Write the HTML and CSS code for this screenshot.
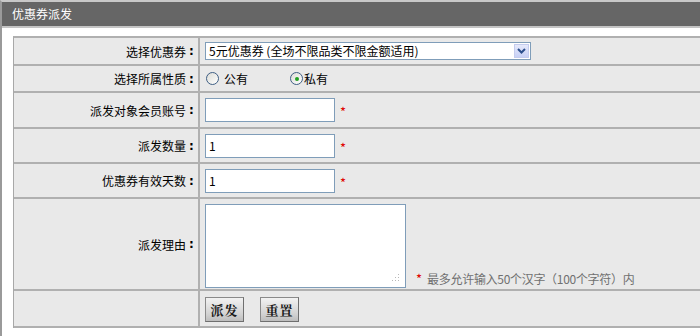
FILE: index.html
```html
<!DOCTYPE html>
<html lang="zh">
<head>
<meta charset="utf-8">
<title>优惠券派发</title>
<link rel="stylesheet" href="styles.css">
</head>
<body>
<div class="panel">
  <div class="panel-head">优惠券派发</div>
  <div class="panel-body">
    <div class="form">
      <div class="row r1">
        <div class="label">选择优惠券<span class="colon">:</span></div>
        <div class="field">
          <div class="select">
            <span class="select-text">5元优惠券 (全场不限品类不限金额适用)</span>
            <span class="select-btn"><svg width="9" height="6" viewBox="0 0 9 6"><path d="M1 1 L4.5 4.5 L8 1" fill="none" stroke="#2c4f8c" stroke-width="2"/></svg></span>
          </div>
        </div>
      </div>
      <div class="row r2">
        <div class="label">选择所属性质<span class="colon">:</span></div>
        <div class="field radios">
          <span class="radio-item"><span class="radio"></span><span class="radio-label">公有</span></span>
          <span class="radio-item second"><span class="radio checked"></span><span class="radio-label tight">私有</span></span>
        </div>
      </div>
      <div class="row r3">
        <div class="label">派发对象会员账号<span class="colon">:</span></div>
        <div class="field"><div class="input"></div><span class="star">*</span></div>
      </div>
      <div class="row r4">
        <div class="label">派发数量<span class="colon">:</span></div>
        <div class="field"><div class="input">1</div><span class="star">*</span></div>
      </div>
      <div class="row r5">
        <div class="label">优惠券有效天数<span class="colon">:</span></div>
        <div class="field"><div class="input">1</div><span class="star">*</span></div>
      </div>
      <div class="row r6">
        <div class="label">派发理由<span class="colon">:</span></div>
        <div class="field area-field">
          <div class="textarea">
            <svg class="grip" width="8" height="8" viewBox="0 0 8 8"><g fill="#b8b8b8"><rect x="6" y="0" width="1" height="1"/><rect x="6" y="3" width="1" height="1"/><rect x="3" y="3" width="1" height="1"/><rect x="6" y="6" width="1" height="1"/><rect x="3" y="6" width="1" height="1"/><rect x="0" y="6" width="1" height="1"/></g></svg>
          </div>
          <span class="star note-star">*</span>
          <span class="note">最多允许输入50个汉字（100个字符）内</span>
        </div>
      </div>
      <div class="row r7">
        <div class="label"></div>
        <div class="field buttons">
          <span class="btn">派发</span>
          <span class="btn">重置</span>
        </div>
      </div>
    </div>
  </div>
</div>
</body>
</html>
```
FILE: styles.css
```css
html, body {
  margin: 0;
  padding: 0;
  background: #ffffff;
  overflow: hidden;
  width: 700px;
  height: 336px;
}
body {
  font-family: "Noto Sans CJK SC", "Liberation Sans", sans-serif;
  font-size: 12px;
  color: #000;
}
.panel {
  width: 730px;
  border-left: 2px solid #9a9a9a;
  border-top: 2px solid #c8c8c8;
  height: 340px;
}
.panel-head {
  height: 24px;
  background: #666666;
  color: #ffffff;
  font-size: 12px;
  line-height: 24px;
  padding-left: 10px;
  border-bottom: 2px solid #c4c4c4;
}
.panel-body {
  padding: 8px 0 0 11px;
}
.form {
  border-top: 2px solid #b0b0b0;
  border-left: 1px solid #a8a8a8;
  background: #e9e9e9;
}
.row {
  display: grid;
  grid-template-columns: 186px 1fr;
  border-bottom: 2px solid #b0b0b0;
  box-sizing: border-box;
}
.r1 { height: 28px; }
.r2 { height: 27px; }
.r3 { height: 36px; }
.r4 { height: 35px; }
.r5 { height: 35px; }
.r6 { height: 92px; }
.r7 { height: 37px; }
.label {
  border-right: 2px solid #b0b0b0;
  padding-right: 1px;
  display: flex;
  align-items: center;
  justify-content: flex-end;
  font-size: 12px;
}
.colon {
  display: inline-block;
  width: 11px;
  text-align: center;
  font-weight: bold;
  font-family: "DejaVu Sans", sans-serif;
  font-size: 12px;
}
.field {
  display: flex;
  align-items: center;
  padding-left: 5px;
}
.select {
  width: 326px;
  height: 18px;
  box-sizing: border-box;
  border: 1px solid #7f9db9;
  background: #fff;
  display: flex;
  align-items: center;
  justify-content: space-between;
  font-size: 12px;
}
.select-text {
  padding-left: 3px;
  line-height: 16px;
}
.select-btn {
  width: 15px;
  height: 14px;
  margin-right: 1px;
  background: linear-gradient(#e6e9fb, #c7d0f5);
  border: 1px solid #c4ccee;
  box-sizing: border-box;
  display: flex;
  align-items: center;
  justify-content: center;
}
.radio-item {
  display: flex;
  align-items: center;
}
.radio-item.second { margin-left: 41px; }
.radio {
  width: 13px;
  height: 13px;
  box-sizing: border-box;
  border: 1px solid #3f5e84;
  border-radius: 50%;
  background: linear-gradient(135deg, #dcdcd6, #ffffff);
  margin-left: 1px;
  position: relative;
}
.radio.checked::after {
  content: "";
  position: absolute;
  left: 3.5px;
  top: 3.5px;
  width: 4px;
  height: 4px;
  border-radius: 50%;
  background: #21a121;
}
.radio-label { margin-left: 5px; }
.radio-label.tight { margin-left: 1px; }
.input {
  width: 130px;
  height: 24px;
  box-sizing: border-box;
  border: 1px solid #7f9db9;
  background: #fff;
  padding-left: 3px;
  line-height: 22px;
  font-size: 12px;
}
.star {
  color: #e00000;
  margin-left: 5px;
  font-size: 13px;
  line-height: 12px;
  padding-top: 4px;
}
.area-field {
  align-items: flex-end;
  padding-bottom: 1px;
  box-sizing: border-box;
}
.textarea {
  width: 201px;
  height: 84px;
  box-sizing: border-box;
  border: 1px solid #7f9db9;
  background: #fff;
  position: relative;
}
.grip {
  position: absolute;
  right: 5px;
  bottom: 5px;
}
.note-star {
  margin-left: 10px;
  margin-bottom: 3px;
}
.note {
  color: #707070;
  margin-left: 5px;
  margin-bottom: 2px;
  line-height: 14px;
  letter-spacing: -0.3px;
}
.buttons { gap: 16px; padding-left: 5px; padding-top: 1px; }
.btn {
  width: 39px;
  height: 25px;
  box-sizing: border-box;
  border: 1px solid #8a8a8a;
  border-right-color: #6f6f6f;
  border-bottom-color: #6f6f6f;
  background: linear-gradient(#f2f2f2, #d2d2d2 70%, #bdbdbd);
  font-family: "Noto Serif CJK SC", "Noto Sans CJK SC", serif;
  font-weight: bold;
  font-size: 13px;
  color: #1a1a1a;
  display: flex;
  align-items: center;
  justify-content: center;
  letter-spacing: 1px;
}
```
